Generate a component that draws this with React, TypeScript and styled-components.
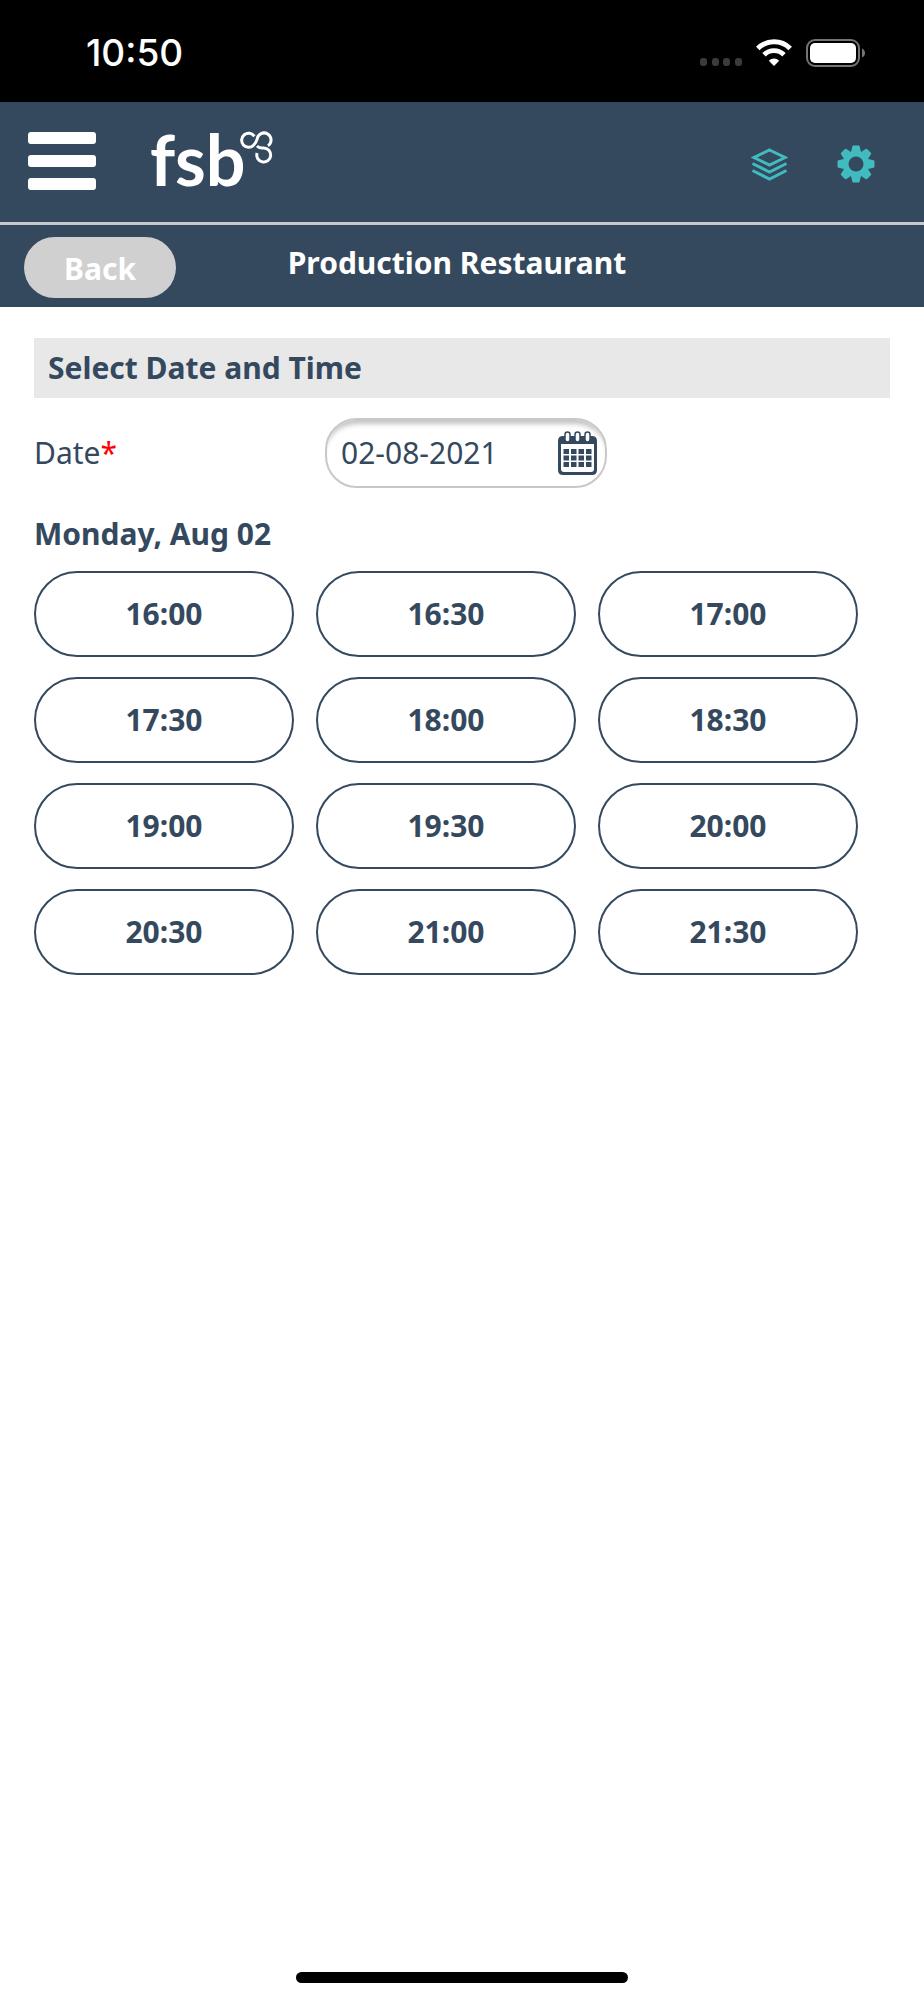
import React, { useState } from "react";
import styled, { createGlobalStyle } from "styled-components";

const navy = "#34495e";
const teal = "#41bbbf";

const GlobalStyle = createGlobalStyle`
  *, *::before, *::after { box-sizing: border-box; }
  body { margin: 0; background: #ffffff; }
  button, input { font: inherit; color: inherit; }
`;

const Page = styled.div`
  display: flex;
  flex-direction: column;
  min-height: 100vh;
  background: #ffffff;
  color: ${navy};
  font-family: "Noto Sans", "Open Sans", sans-serif;
  font-size: 30px;
  line-height: 40px;
`;

const StatusBar = styled.div`
  display: flex;
  align-items: center;
  justify-content: space-between;
  height: 102px;
  padding: 4px 59px 0 86px;
  background: #000000;
  color: #ffffff;
`;

const Clock = styled.time`
  font-family: Inter, sans-serif;
  font-size: 37px;
  font-weight: 500;
`;

const StatusIcons = styled.div`
  display: flex;
  align-items: center;
  gap: 14px;
`;

const Header = styled.header`
  display: flex;
  align-items: center;
  height: 123px;
  padding: 0 49px 0 28px;
  background: ${navy};
  border-bottom: 3px solid #c5c9cc;
`;

const IconButton = styled.button`
  display: flex;
  padding: 0;
  border: 0;
  background: none;
  color: ${teal};
  cursor: pointer;
`;

const MenuButton = styled(IconButton)`
  flex-direction: column;
  gap: 11px;
  width: 68px;
  padding-bottom: 2px;
`;

const MenuLine = styled.span`
  width: 100%;
  height: 12px;
  border-radius: 3px;
  background: #ffffff;
`;

const LogoLink = styled.a`
  display: flex;
  margin-left: 54px;
`;

const HeaderActions = styled.div`
  display: flex;
  align-items: center;
  gap: 49px;
  margin-left: auto;
  padding-top: 4px;
`;

const TitleBar = styled.div`
  display: grid;
  grid-template-columns: 1fr auto 1fr;
  align-items: center;
  height: 82px;
  padding: 2px 34px 0 24px;
  background: ${navy};
  color: #ffffff;
`;

const BackButton = styled.button`
  justify-self: start;
  width: 152px;
  height: 61px;
  padding: 4px 0 0;
  border: 0;
  border-radius: 31px;
  background: #d0d0d0;
  color: #ffffff;
  font-weight: 700;
  line-height: 40px;
  cursor: pointer;
`;

const Title = styled.h1`
  margin: 0 0 8px;
  font-size: 30px;
  font-weight: 700;
`;

const Content = styled.main`
  display: flex;
  flex-direction: column;
  padding: 31px 34px;
`;

const SectionTitle = styled.h2`
  margin: 0;
  padding: 10px 14px;
  background: #e8e8e8;
  font-size: 30px;
  font-weight: 700;
`;

const DateRow = styled.div`
  display: grid;
  grid-template-columns: 34% 282px;
  align-items: center;
  margin-top: 20px;
`;

const Required = styled.span`
  color: #ff0000;
`;

const DateField = styled.div`
  display: flex;
  align-items: center;
  height: 70px;
  padding: 0 8px 0 14px;
  border: 2px solid #c8c8c8;
  border-radius: 32px;
  background: #ffffff;
  box-shadow: inset 0 8px 5px -4px #c4c4c4;
`;

const DateInput = styled.input`
  flex: 1;
  min-width: 0;
  padding: 0;
  border: 0;
  outline: 0;
  background: transparent;
`;

const DayTitle = styled.h3`
  margin: 26px 0 17px;
  font-size: 30px;
  font-weight: 700;
`;

const SlotGrid = styled.div`
  display: grid;
  grid-template-columns: repeat(3, 1fr);
  gap: 20px 22px;
  padding-right: 32px;
`;

const Slot = styled.button`
  height: 86px;
  padding: 0;
  border: 2px solid ${navy};
  border-radius: 43px;
  background: #ffffff;
  font-weight: 700;
  cursor: pointer;
`;

const HomeIndicator = styled.div`
  align-self: center;
  width: 36%;
  height: 11px;
  margin: auto 0 17px;
  border-radius: 6px;
  background: #000000;
`;

const slots = [
  "16:00", "16:30", "17:00",
  "17:30", "18:00", "18:30",
  "19:00", "19:30", "20:00",
  "20:30", "21:00", "21:30",
];

const SignalDots = () => (
  <svg width="42" height="28" viewBox="0 0 42 28" fill="#3b3b3b" aria-hidden="true">
    {[0, 12, 23, 35].map((x) => (
      <rect key={x} x={x} y="19" width="7" height="8" rx="3" />
    ))}
  </svg>
);

const WifiIcon = () => (
  <svg width="36" height="28" viewBox="0 0 36 28" fill="none" stroke="#ffffff" aria-hidden="true">
    <path d="M1.8 9.4a23 23 0 0 1 32.4 0" strokeWidth="5" />
    <path d="M8 15.7a14.2 14.2 0 0 1 20 0" strokeWidth="4.8" />
    <path d="M18 27l-5.2-5.3a7.4 7.4 0 0 1 10.4 0z" fill="#ffffff" stroke="none" />
  </svg>
);

const BatteryIcon = () => (
  <svg width="59" height="28" viewBox="0 0 59 28" aria-hidden="true">
    <rect x="1" y="1" width="52" height="26" rx="8" fill="none" stroke="#747474" strokeWidth="2" />
    <rect x="4" y="4" width="46" height="20" rx="5" fill="#ffffff" />
    <path d="M56 9.5q3 1.5 3 4.5t-3 4.5z" fill="#747474" />
  </svg>
);

const Logo = () => (
  <svg width="124" height="88" viewBox="0 0 124 88" role="img" aria-label="fsb">
    <text x="0" y="68" fill="#ffffff" fontFamily="Lato, sans-serif" fontSize="70" fontWeight="700">fsb</text>
    <g fill="none" stroke="#ffffff" strokeWidth="3">
      <path d="M104.4 18.3A7 7 0 1 0 103.6 27.2C106 25 106.5 23 107.1 21A7 7 0 1 1 118 27.7" />
      <path d="M107 28Q109.5 30.5 113.7 30A7 7 0 1 1 107 35" />
    </g>
  </svg>
);

const LayersIcon = () => (
  <svg width="37" height="33" viewBox="0 0 37 33" fill="none" stroke={teal} strokeWidth="3" aria-hidden="true">
    <path d="M18.5 2L34 9.5L18.5 17L3 9.5Z" />
    <path d="M1.5 15.500L18.5 24L35.5 15.500" />
    <path d="M1.5 22.500L18.5 31L35.5 22.500" />
  </svg>
);

const GearIcon = () => (
  <svg width="38" height="38" viewBox="-19 -19 38 38" fill={teal} aria-hidden="true">
    {[0, 45, 90, 135].map((angle) => (
      <path
        key={angle}
        transform={`rotate(${angle})`}
        d="M-2.500 -18.500H2.500Q3.500 -18.500 3.700 -17.500L5 -12V12L3.700 17.500Q3.500 18.500 2.500 18.500H-2.500Q-3.500 18.500 -3.700 17.500L-5 12V-12L-3.700 -17.500Q-3.500 -18.500 -2.500 -18.500Z"
      />
    ))}
    <circle r="13" />
    <circle r="7.500" fill={navy} />
  </svg>
);

const CalendarIcon = () => (
  <svg width="39" height="44" viewBox="0 0 39 44" fill={navy} aria-hidden="true">
    <path
      fillRule="evenodd"
      d="M5 5H34Q39 5 39 10V39Q39 44 34 44H5Q0 44 0 39V10Q0 5 5 5ZM3 13V38Q3 41 6 41H33Q36 41 36 38V13Z"
    />
    {[9.5, 19.5, 29.5].map((x) => (
      <rect key={x} x={x - 2.5} y="1" width="5" height="10" rx="2.5" fill="#ffffff" stroke={navy} strokeWidth="1.5" />
    ))}
    {[18, 24.5, 31].map((y) =>
      [5.5, 13, 20.5, 28].map((x) => <rect key={`${x}-${y}`} x={x} y={y} width="5.5" height="5" />)
    )}
  </svg>
);

export default function App() {
  const [date, setDate] = useState("02-08-2021");

  return (
    <Page>
      <GlobalStyle />
      <StatusBar>
        <Clock>10:50</Clock>
        <StatusIcons>
          <SignalDots />
          <WifiIcon />
          <BatteryIcon />
        </StatusIcons>
      </StatusBar>
      <Header>
        <MenuButton type="button" aria-label="Menu">
          <MenuLine />
          <MenuLine />
          <MenuLine />
        </MenuButton>
        <LogoLink href="#">
          <Logo />
        </LogoLink>
        <HeaderActions>
          <IconButton type="button" aria-label="Layers">
            <LayersIcon />
          </IconButton>
          <IconButton type="button" aria-label="Settings">
            <GearIcon />
          </IconButton>
        </HeaderActions>
      </Header>
      <TitleBar>
        <BackButton type="button">Back</BackButton>
        <Title>Production Restaurant</Title>
      </TitleBar>
      <Content>
        <SectionTitle>Select Date and Time</SectionTitle>
        <DateRow>
          <label htmlFor="date">
            Date<Required>*</Required>
          </label>
          <DateField>
            <DateInput id="date" type="text" value={date} onChange={(e) => setDate(e.target.value)} />
            <IconButton type="button" aria-label="Open calendar">
              <CalendarIcon />
            </IconButton>
          </DateField>
        </DateRow>
        <DayTitle>Monday, Aug 02</DayTitle>
        <SlotGrid>
          {slots.map((time) => (
            <Slot key={time} type="button">
              {time}
            </Slot>
          ))}
        </SlotGrid>
      </Content>
      <HomeIndicator />
    </Page>
  );
}
